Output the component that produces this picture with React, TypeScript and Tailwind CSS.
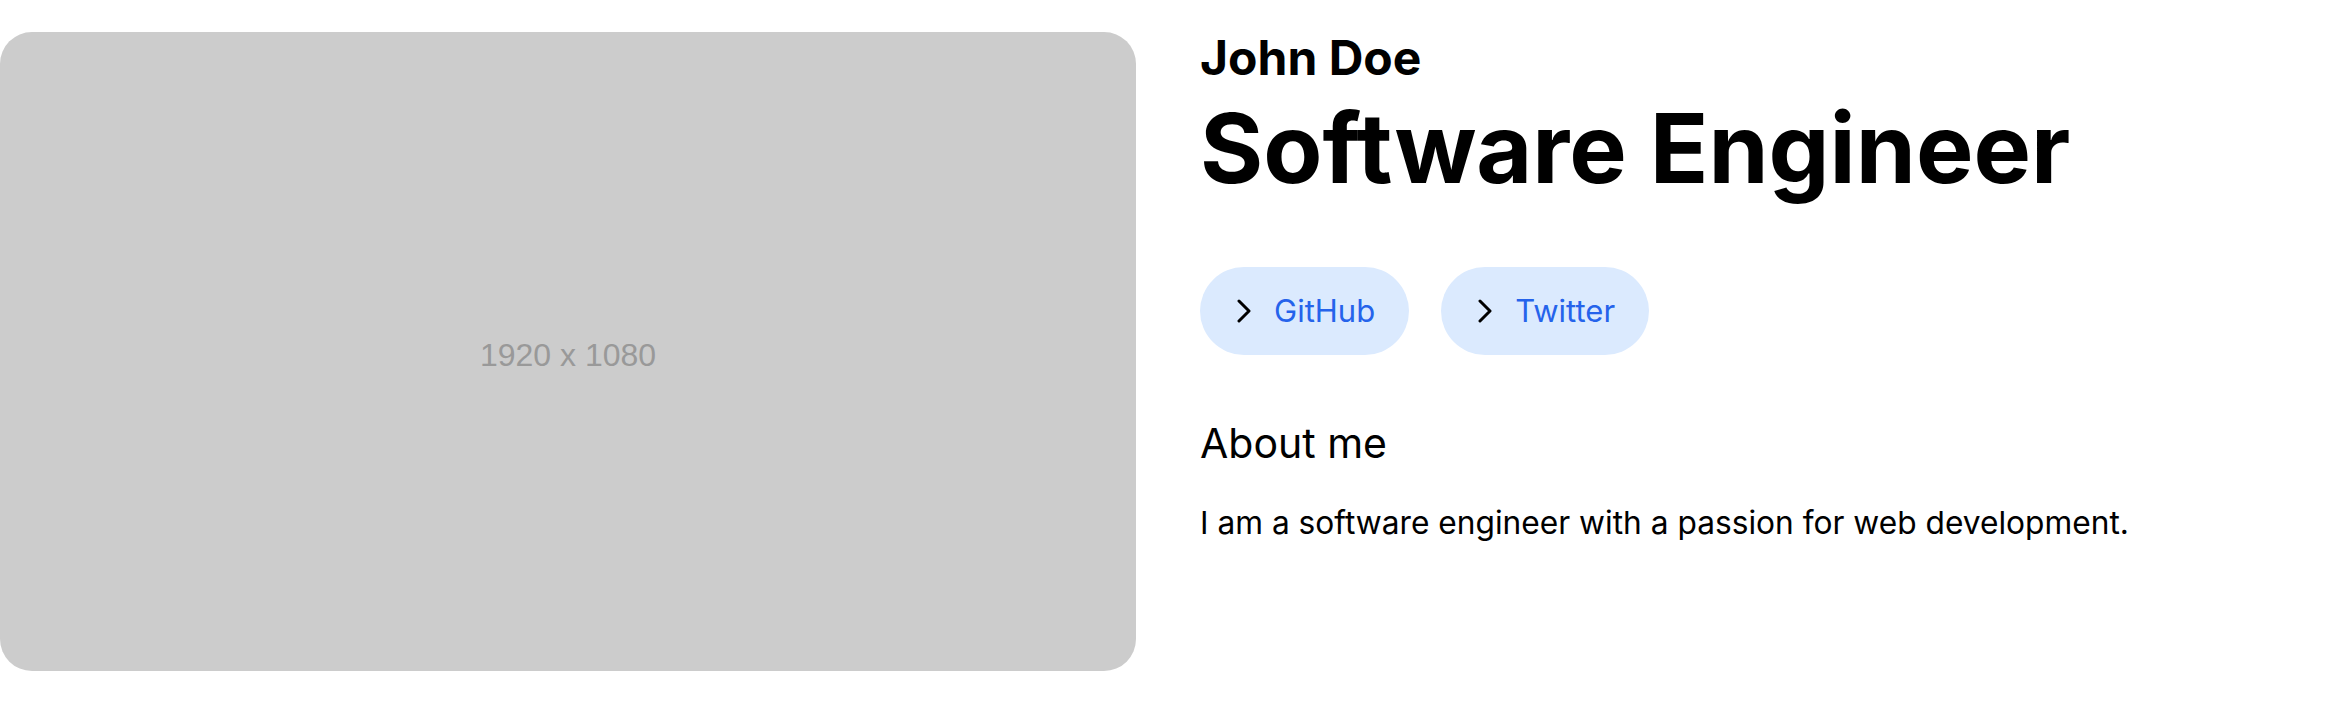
const links = ['GitHub', 'Twitter'];

function Chevron() {
  return (
    <svg width="14" height="24" viewBox="0 0 14 24" fill="none" className="shrink-0">
      <polyline
        points="2,2 12,12 2,22"
        stroke="#000"
        strokeWidth="3"
        strokeLinecap="round"
        strokeLinejoin="round"
      />
    </svg>
  );
}

export default function App() {
  return (
    <div className="grid grid-cols-2 gap-16 py-8 bg-white">
      <div className="aspect-video bg-[#cccccc] rounded-[32px] flex items-center justify-center">
        <span className="mt-[6px] text-[32px] text-[#999999] font-['Liberation_Sans',Arial,sans-serif]">
          1920 x 1080
        </span>
      </div>

      <div className="flex flex-col items-start font-['Inter',sans-serif] text-black">
        <h2 className="mt-[2px] text-5xl leading-[48px] font-bold">John Doe</h2>
        <h1 className="mt-[18px] text-[96.6px] leading-[96px] font-bold">Software Engineer</h1>

        <div className="mt-[71px] flex gap-8">
          {links.map((l) => (
            <a
              key={l}
              href="#"
              className="h-[88px] flex items-center gap-[23px] pl-[37px] pr-[34px] rounded-full bg-[#dbeafe] text-[#2563eb] text-[31px]"
            >
              <Chevron />
              {l}
            </a>
          ))}
        </div>

        <h3 className="mt-[64px] text-[41px] leading-[48px]">About me</h3>
        <p className="mt-[36px] text-[31.7px] leading-[40px]">
          I am a software engineer with a passion for web development.
        </p>
      </div>
    </div>
  );
}
